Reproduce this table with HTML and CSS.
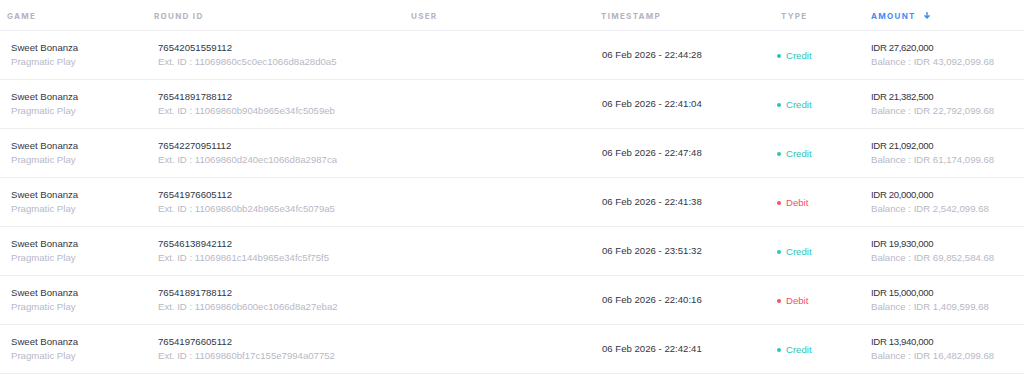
FILE: index.html
```html
<!DOCTYPE html>
<html>
<head>
<meta charset="utf-8">
<link rel="stylesheet" href="styles.css">
</head>
<body>
<div class="table">
  <div class="row head">
    <div class="c c1">GAME</div>
    <div class="c c2">ROUND ID</div>
    <div class="c c3">USER</div>
    <div class="c c4">TIMESTAMP</div>
    <div class="c c5">TYPE</div>
    <div class="c c6 sorted">AMOUNT <svg class="arrow" width="6" height="7" viewBox="0 0 6 7"><path d="M3 0.6V6M0.9 3.8L3 6.1L5.1 3.8" fill="none" stroke="currentColor" stroke-width="1.5" stroke-linecap="round" stroke-linejoin="round"/></svg></div>
  </div>

  <div class="row">
    <div class="c c1"><div class="main">Sweet Bonanza</div><div class="sub">Pragmatic Play</div></div>
    <div class="c c2"><div class="main">76542051559112</div><div class="sub">Ext. ID : 11069860c5c0ec1066d8a28d0a5</div></div>
    <div class="c c3"></div>
    <div class="c c4 ts">06 Feb 2026 - 22:44:28</div>
    <div class="c c5"><span class="type credit"><i class="dot"></i>Credit</span></div>
    <div class="c c6"><div class="main amt">IDR 27,620,000</div><div class="sub">Balance : IDR 43,092,099.68</div></div>
  </div>

  <div class="row">
    <div class="c c1"><div class="main">Sweet Bonanza</div><div class="sub">Pragmatic Play</div></div>
    <div class="c c2"><div class="main">76541891788112</div><div class="sub">Ext. ID : 11069860b904b965e34fc5059eb</div></div>
    <div class="c c3"></div>
    <div class="c c4 ts">06 Feb 2026 - 22:41:04</div>
    <div class="c c5"><span class="type credit"><i class="dot"></i>Credit</span></div>
    <div class="c c6"><div class="main amt">IDR 21,382,500</div><div class="sub">Balance : IDR 22,792,099.68</div></div>
  </div>

  <div class="row gap">
    <div class="c c1"><div class="main">Sweet Bonanza</div><div class="sub">Pragmatic Play</div></div>
    <div class="c c2"><div class="main">76542270951112</div><div class="sub">Ext. ID : 11069860d240ec1066d8a2987ca</div></div>
    <div class="c c3"></div>
    <div class="c c4 ts">06 Feb 2026 - 22:47:48</div>
    <div class="c c5"><span class="type credit"><i class="dot"></i>Credit</span></div>
    <div class="c c6"><div class="main amt">IDR 21,092,000</div><div class="sub">Balance : IDR 61,174,099.68</div></div>
  </div>

  <div class="row">
    <div class="c c1"><div class="main">Sweet Bonanza</div><div class="sub">Pragmatic Play</div></div>
    <div class="c c2"><div class="main">76541976605112</div><div class="sub">Ext. ID : 11069860bb24b965e34fc5079a5</div></div>
    <div class="c c3"></div>
    <div class="c c4 ts">06 Feb 2026 - 22:41:38</div>
    <div class="c c5"><span class="type debit"><i class="dot"></i>Debit</span></div>
    <div class="c c6"><div class="main amt">IDR 20,000,000</div><div class="sub">Balance : IDR 2,542,099.68</div></div>
  </div>

  <div class="row">
    <div class="c c1"><div class="main">Sweet Bonanza</div><div class="sub">Pragmatic Play</div></div>
    <div class="c c2"><div class="main">76546138942112</div><div class="sub">Ext. ID : 11069861c144b965e34fc5f75f5</div></div>
    <div class="c c3"></div>
    <div class="c c4 ts">06 Feb 2026 - 23:51:32</div>
    <div class="c c5"><span class="type credit"><i class="dot"></i>Credit</span></div>
    <div class="c c6"><div class="main amt">IDR 19,930,000</div><div class="sub">Balance : IDR 69,852,584.68</div></div>
  </div>

  <div class="row">
    <div class="c c1"><div class="main">Sweet Bonanza</div><div class="sub">Pragmatic Play</div></div>
    <div class="c c2"><div class="main">76541891788112</div><div class="sub">Ext. ID : 11069860b600ec1066d8a27eba2</div></div>
    <div class="c c3"></div>
    <div class="c c4 ts">06 Feb 2026 - 22:40:16</div>
    <div class="c c5"><span class="type debit"><i class="dot"></i>Debit</span></div>
    <div class="c c6"><div class="main amt">IDR 15,000,000</div><div class="sub">Balance : IDR 1,409,599.68</div></div>
  </div>

  <div class="row">
    <div class="c c1"><div class="main">Sweet Bonanza</div><div class="sub">Pragmatic Play</div></div>
    <div class="c c2"><div class="main">76541976605112</div><div class="sub">Ext. ID : 11069860bf17c155e7994a07752</div></div>
    <div class="c c3"></div>
    <div class="c c4 ts">06 Feb 2026 - 22:42:41</div>
    <div class="c c5"><span class="type credit"><i class="dot"></i>Credit</span></div>
    <div class="c c6"><div class="main amt">IDR 13,940,000</div><div class="sub">Balance : IDR 16,482,099.68</div></div>
  </div>
</div>
</body>
</html>
```

FILE: styles.css
```css
html, body {
  margin: 0;
  padding: 0;
  background: #ffffff;
}

body {
  font-family: "Liberation Sans", Arial, sans-serif;
  font-size: 9.6px;
  color: #35353f;
}

.table {
  width: 1024px;
}

.row {
  display: grid;
  grid-template-columns: 150px 257px 190px 175px 95px 1fr;
  height: 48px;
  border-bottom: 1px solid #eeeef2;
  align-items: center;
}

.row.head {
  height: 29px;
  font-family: "Inter", "Lato", sans-serif;
  font-weight: 700;
  font-size: 8px;
  letter-spacing: 1.3px;
  color: #b3b3c0;
  padding-top: 1px;
}

.c {
  line-height: 14px;
  white-space: nowrap;
}

/* body cell offsets */
.c1 { padding-left: 11px; }
.c2 { padding-left: 8px; }
.c3 { padding-left: 4px; }
.c4 { padding-left: 5px; }
.c5 { padding-left: 5px; }
.c6 { padding-left: 4px; }

/* header cell offsets */
.head .c1 { padding-left: 7px; }
.head .c2 { padding-left: 4px; }
.head .c3 { padding-left: 4px; }
.head .c4 { padding-left: 4px; }
.head .c5 { padding-left: 9px; }
.head .c6 { padding-left: 4px; }

.head .sorted {
  color: #3f8ef5;
  display: flex;
  align-items: center;
}

.arrow {
  margin-left: 8px;
  color: #3f8ef5;
}

.main {
  color: #35353f;
}

.sub {
  color: #b8b8c6;
}

.ts {
  color: #35353f;
}

.amt {
  letter-spacing: -0.35px;
}

.type {
  display: inline-flex;
  align-items: center;
}

.dot {
  width: 4px;
  height: 4px;
  border-radius: 50%;
  margin-right: 5px;
  display: inline-block;
}

.credit { color: #2cc5b5; }
.credit .dot { background: #2cc5b5; }
.debit { color: #f2506b; }
.debit .dot { background: #f2506b; }
```
